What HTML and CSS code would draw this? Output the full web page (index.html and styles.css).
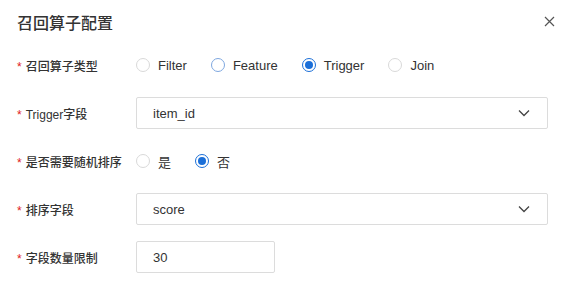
FILE: index.html
```html
<!DOCTYPE html>
<html lang="zh-CN">
<head>
    <meta charset="UTF-8">
    <title>召回算子配置</title>
    <link rel="stylesheet" href="styles.css">
</head>
<body>
    <div class="dialog">
        <header class="dialog-header">
            <h2>召回算子配置</h2>
            <button class="close-btn" aria-label="关闭">
                <svg width="11" height="11" viewBox="0 0 11 11"><path d="M1 1L10 10M10 1L1 10" stroke="#555" stroke-width="1.2" fill="none"/></svg>
            </button>
        </header>

        <form class="form">
            <div class="form-row">
                <label class="form-label"><span class="req">*</span>召回算子类型</label>
                <div class="radio-group">
                    <label class="radio"><span class="radio-dot"></span>Filter</label>
                    <label class="radio hover"><span class="radio-dot"></span>Feature</label>
                    <label class="radio checked"><span class="radio-dot"></span>Trigger</label>
                    <label class="radio"><span class="radio-dot"></span>Join</label>
                </div>
            </div>

            <div class="form-row">
                <label class="form-label"><span class="req">*</span>Trigger字段</label>
                <div class="select">
                    <span>item_id</span>
                    <svg class="chevron" width="12" height="8" viewBox="0 0 12 8"><path d="M1 1.5L6 6.5L11 1.5" stroke="#444" stroke-width="1.3" fill="none"/></svg>
                </div>
            </div>

            <div class="form-row">
                <label class="form-label"><span class="req">*</span>是否需要随机排序</label>
                <div class="radio-group">
                    <label class="radio"><span class="radio-dot"></span>是</label>
                    <label class="radio checked"><span class="radio-dot"></span>否</label>
                </div>
            </div>

            <div class="form-row">
                <label class="form-label"><span class="req">*</span>排序字段</label>
                <div class="select">
                    <span>score</span>
                    <svg class="chevron" width="12" height="8" viewBox="0 0 12 8"><path d="M1 1.5L6 6.5L11 1.5" stroke="#444" stroke-width="1.3" fill="none"/></svg>
                </div>
            </div>

            <div class="form-row">
                <label class="form-label"><span class="req">*</span>字段数量限制</label>
                <input class="input-number" type="text" value="30">
            </div>
        </form>
    </div>
</body>
</html>
```

FILE: styles.css
```css
/* --- Base --- */
* {
    box-sizing: border-box;
    margin: 0;
    padding: 0;
}

body {
    font-family: "Liberation Sans", "Noto Sans CJK SC", sans-serif;
    background: #ffffff;
    color: #333;
    font-size: 13px;
}

.dialog {
    width: 565px;
    height: 308px;
    background: #fff;
}

/* --- Header --- */
.dialog-header {
    display: flex;
    justify-content: space-between;
    align-items: center;
    padding: 11px 10px 0 17px;
    height: 32px;
}

.dialog-header h2 {
    font-size: 16px;
    font-weight: 500;
    color: #333;
}

.close-btn {
    border: none;
    background: none;
    width: 11px;
    height: 11px;
    display: flex;
    cursor: pointer;
}

/* --- Form --- */
.form {
    padding: 17px 17px 0 17px;
}

.form-row {
    display: flex;
    align-items: center;
    height: 32px;
    margin-bottom: 16px;
}

.form-label {
    width: 119px;
    flex-shrink: 0;
    font-size: 12px;
    font-weight: 500;
    color: #333;
    white-space: nowrap;
}

.req {
    color: #e0201a;
    margin-right: 4px;
}

/* --- Radio --- */
.radio-group {
    display: flex;
    align-items: center;
}

.radio {
    display: flex;
    align-items: center;
    gap: 8px;
    margin-right: 24px;
    color: #333;
}

.radio-dot {
    width: 14px;
    height: 14px;
    border-radius: 50%;
    border: 1px solid #d9d9d9;
    background: #fff;
    position: relative;
}

.radio.hover .radio-dot {
    border-color: #7ea7e0;
}

.radio.checked .radio-dot {
    border-color: #1b6fd8;
}

.radio.checked .radio-dot::after {
    content: "";
    position: absolute;
    left: 2px;
    top: 2px;
    width: 8px;
    height: 8px;
    border-radius: 50%;
    background: #1b6fd8;
}

/* --- Select & Input --- */
.select {
    display: flex;
    justify-content: space-between;
    align-items: center;
    width: 412px;
    height: 32px;
    border: 1px solid #dcdcdc;
    border-radius: 2px;
    padding: 0 17px 0 16px;
    color: #333;
}

.input-number {
    width: 139px;
    height: 32px;
    border: 1px solid #dcdcdc;
    border-radius: 2px;
    padding: 0 16px;
    font-family: inherit;
    font-size: 13px;
    color: #333;
    outline: none;
}
```
